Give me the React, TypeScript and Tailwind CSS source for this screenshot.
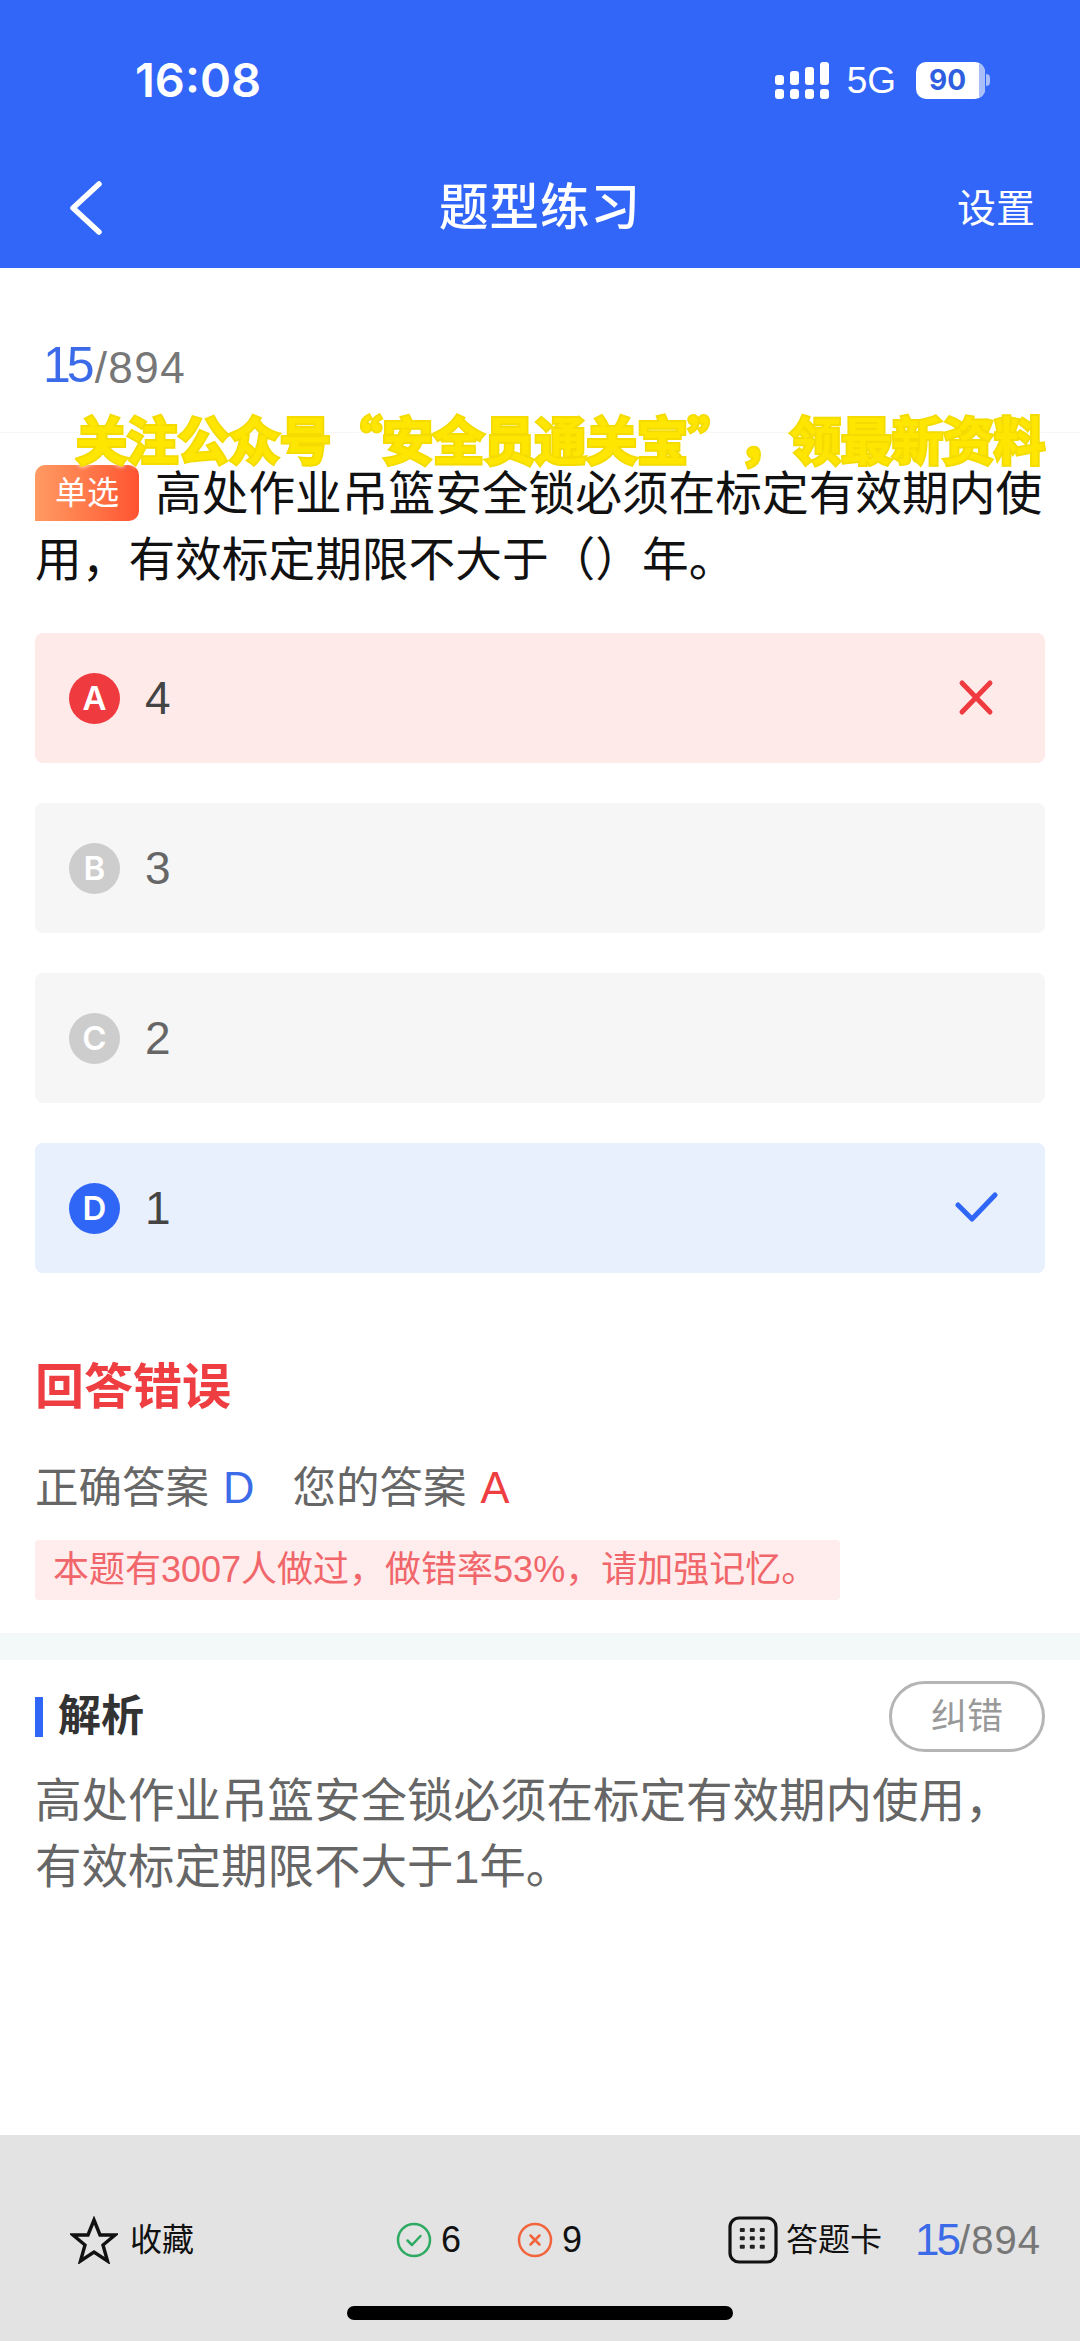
const options = [
  { letter: 'A', text: '4', row: 'bg-[#feebe9]', dot: 'bg-[#ef3b40]', color: 'text-[#444444]', mark: 'wrong' },
  { letter: 'B', text: '3', row: 'bg-[#f6f6f6]', dot: 'bg-[#cdcdcd]', color: 'text-[#666666]', mark: '' },
  { letter: 'C', text: '2', row: 'bg-[#f6f6f6]', dot: 'bg-[#cdcdcd]', color: 'text-[#666666]', mark: '' },
  { letter: 'D', text: '1', row: 'bg-[#e8effd]', dot: 'bg-[#2f66f6]', color: 'text-[#444444]', mark: 'right' },
];

function SignalIcon() {
  return (
    <svg width="54" height="37" viewBox="0 0 54 37" fill="white" aria-hidden>
      <rect x="0" y="13" width="9" height="10" rx="3" />
      <rect x="15" y="9" width="9" height="14" rx="3" />
      <rect x="30" y="5" width="9" height="18" rx="3" />
      <rect x="45" y="0" width="9" height="23" rx="3" />
      <rect x="0" y="27" width="9" height="10" rx="3" />
      <rect x="15" y="27" width="9" height="10" rx="3" />
      <rect x="30" y="27" width="9" height="10" rx="3" />
      <rect x="45" y="27" width="9" height="10" rx="3" />
    </svg>
  );
}

function Battery() {
  return (
    <div className="flex items-center">
      <div className="relative flex h-[37px] w-[69px] items-center overflow-hidden rounded-[10px] bg-white pl-[13px] font-['Inter'] text-[28px] font-bold leading-none text-[#2f5fe0]">
        90
        <div className="absolute inset-y-0 right-0 w-[6px] bg-[#a9bffa]" />
      </div>
      <div className="ml-[1px] h-[12px] w-[4px] rounded-r-full bg-[#a9bffa]" />
    </div>
  );
}

function GridIcon() {
  return (
    <svg width="50" height="48" viewBox="0 0 50 48" fill="none" aria-hidden>
      <rect x="2" y="2" width="46" height="44" rx="9" stroke="#111" strokeWidth="3.2" />
      {[14, 22.3, 30.7].map((y) =>
        [14.3, 24.3, 34.3].map((x) => <rect key={`${x}-${y}`} x={x - 2.5} y={y - 2} width="5" height="4" rx="1" fill="#222" />),
      )}
    </svg>
  );
}

export default function App() {
  return (
    <div className="flex h-[2341px] w-[1080px] flex-col overflow-hidden bg-white font-['Liberation_Sans','Noto_Sans_CJK_SC',sans-serif]">
      <header className="h-[268px] shrink-0 bg-[#3166f8] text-white">
        <div className="flex h-[160px] items-center pl-[135px] pr-[90px]">
          <span className="font-['Inter'] text-[47px] font-semibold">16:08</span>
          <div className="ml-auto flex items-center">
            <SignalIcon />
            <span className="ml-[18px] text-[37px] leading-none">5G</span>
            <div className="ml-[20px]">
              <Battery />
            </div>
          </div>
        </div>
        <div className="relative flex h-[96px] items-center justify-center">
          <svg className="absolute left-[64px] top-[18px]" width="42" height="60" viewBox="0 0 42 60" fill="none" aria-hidden>
            <path d="M35 6L9 30l26 24" stroke="white" strokeWidth="5.5" strokeLinecap="round" strokeLinejoin="round" />
          </svg>
          <span className="text-[49.5px] font-medium tracking-[1px]">题型练习</span>
          <span className="absolute right-[45px] top-[24px] text-[39px] leading-[50px]">设置</span>
        </div>
      </header>

      <div className="flex h-[165px] shrink-0 items-end border-b border-[#f6f6f6] pb-[42px] pl-[43px]">
        <span className="text-[50px] leading-none tracking-[-4px] text-[#3b6be8]">15</span>
        <span className="ml-[4px] text-[44px] leading-[44px] tracking-[1.5px] text-[#777777]">/894</span>
      </div>

      <div className="relative px-[35px] pt-[28px]">
        {/* watermark stuck on top of the screenshot */}
        <div className="absolute left-[76px] top-[-27px] z-10 whitespace-nowrap font-['Noto_Sans_CJK_SC'] text-[51px] font-bold leading-[64px] text-[#ffe600] [text-spacing-trim:space-all] [-webkit-text-stroke:4px_#f4dc00] [paint-order:stroke_fill] [filter:drop-shadow(0_0_2px_white)]">
          关注公众号“安全员通关宝”，领最新资料
        </div>
        <p className="text-[46.7px] leading-[66px] text-[#111111]">
          <span className="-my-[12px] mr-[16px] inline-block h-[56px] w-[104px] rounded-[10px] rounded-bl-none bg-gradient-to-r from-[#ff9a62] to-[#ff5230] text-center align-[6px] text-[32px] leading-[56px] text-white">
            单选
          </span>
          高处作业吊篮安全锁必须在标定有效期内使用，有效标定期限不大于（）年。
        </p>

        <div className="mt-[40px] flex flex-col gap-[40px]">
          {options.map((o) => (
            <div key={o.letter} className={`flex h-[130px] items-center rounded-[8px] pl-[34px] pr-[47px] ${o.row}`}>
              <div className={`flex h-[51px] w-[51px] items-center justify-center rounded-full font-['Inter'] text-[33px] font-semibold leading-none text-white ${o.dot}`}>
                {o.letter}
              </div>
              <span className={`ml-[25px] text-[46px] leading-none ${o.color}`}>{o.text}</span>
              {o.mark === 'wrong' && (
                <svg className="ml-auto" width="44" height="44" viewBox="0 0 44 44" fill="none" aria-hidden>
                  <path d="M8 7l28 29M36 7L8 36" stroke="#ef3b40" strokeWidth="5" strokeLinecap="round" />
                </svg>
              )}
              {o.mark === 'right' && (
                <svg className="ml-auto" width="44" height="44" viewBox="0 0 44 44" fill="none" aria-hidden>
                  <path d="M4 19l14 14L41 9" stroke="#2f66f6" strokeWidth="5" strokeLinecap="round" strokeLinejoin="round" />
                </svg>
              )}
            </div>
          ))}
        </div>

        <h2 className="mt-[84px] text-[49px] font-bold leading-[60px] text-[#ef3e42]">回答错误</h2>
        <div className="mt-[42px] flex h-[60px] items-center text-[43.5px] text-[#666666]">
          <span>正确答案</span>
          <span className="ml-[14px] text-[#3b6be8]">D</span>
          <span className="ml-[38px]">您的答案</span>
          <span className="ml-[14px] text-[#ef3e42]">A</span>
        </div>
        <div className="mt-[21px] flex h-[60px] w-[805px] items-center rounded-[4px] bg-[#ffecec] pl-[18px] text-[36px] text-[#f0666a]">
          本题有3007人做过，做错率53%，请加强记忆。
        </div>
      </div>

      <div className="mt-[33px] h-[27px] shrink-0 bg-[#f3f8f8]" />

      <div className="flex-1 px-[35px] pt-[21px]">
        <div className="flex h-[71px] items-center">
          <div className="h-[40px] w-[8px] bg-[#2f66f6]" />
          <h3 className="ml-[15px] text-[43px] font-bold leading-none text-[#333333]">解析</h3>
          <div className="ml-auto flex h-[71px] w-[156px] items-center justify-center rounded-full border-[3px] border-[#b5b5b5] text-[36px] leading-none text-[#999999]">
            纠错
          </div>
        </div>
        <p className="mt-[16px] text-[46.5px] leading-[66px] text-[#666666]">
          高处作业吊篮安全锁必须在标定有效期内使用，有效标定期限不大于1年。
        </p>
      </div>

      <footer className="flex h-[206px] shrink-0 flex-col items-center bg-[#e3e3e3] pt-[72px]">
        <div className="flex h-[66px] w-full items-center pl-[70px] text-[#111111]">
          <svg width="48" height="48" viewBox="0 0 48 48" fill="none" aria-hidden>
            <path d="M24 4l6 15h15L33 29l4.5 16L24 36l-13.5 9L15 29 3 19h15z" stroke="#111" strokeWidth="3.4" strokeLinejoin="miter" />
          </svg>
          <span className="ml-[12px] text-[32px]">收藏</span>
          <svg className="ml-[202px]" width="36" height="36" viewBox="0 0 36 36" fill="none" aria-hidden>
            <circle cx="18" cy="18" r="16" stroke="#2eaa62" strokeWidth="2.5" />
            <path d="M11.5 18.5l4.5 4.5 8.5-9" stroke="#2eaa62" strokeWidth="2.5" strokeLinecap="round" strokeLinejoin="round" />
          </svg>
          <span className="ml-[9px] text-[36px]">6</span>
          <svg className="ml-[56px]" width="36" height="36" viewBox="0 0 36 36" fill="none" aria-hidden>
            <circle cx="18" cy="18" r="16" stroke="#f2643c" strokeWidth="2.5" />
            <path d="M13.5 13.5l9 9M22.5 13.5l-9 9" stroke="#f2643c" strokeWidth="2.5" strokeLinecap="round" />
          </svg>
          <span className="ml-[9px] text-[36px]">9</span>
          <div className="ml-[146px]">
            <GridIcon />
          </div>
          <span className="ml-[8px] text-[32px]">答题卡</span>
          <span className="ml-[33px] text-[44px] leading-none tracking-[-3px] text-[#3b6be8]">15</span>
          <span className="ml-[1px] text-[40px] leading-none tracking-[1px] text-[#777777]">/894</span>
        </div>
        <div className="mt-[33px] h-[14px] w-[386px] rounded-full bg-black" />
      </footer>
    </div>
  );
}
